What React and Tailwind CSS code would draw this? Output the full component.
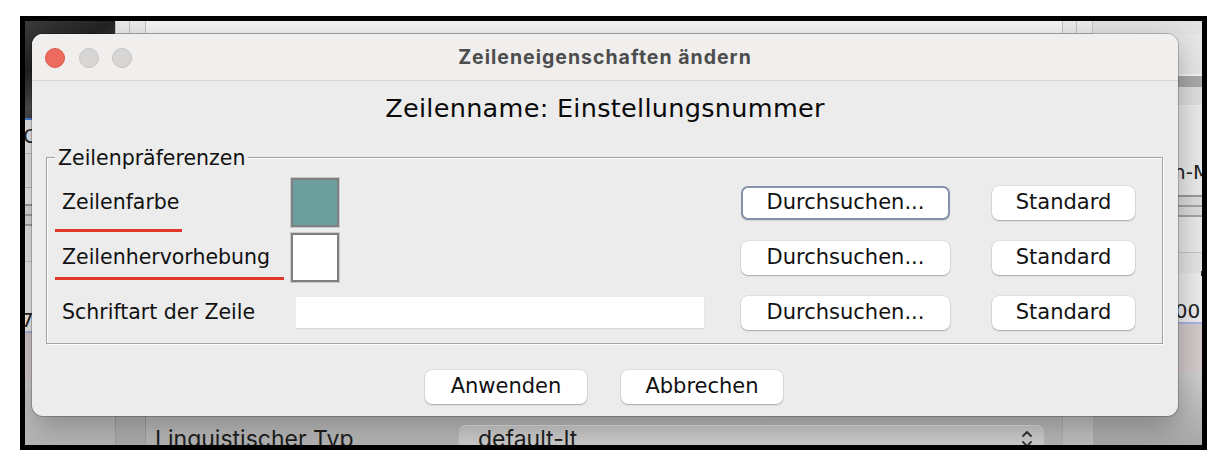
const BODY = "font-['DejaVu_Sans',sans-serif]";

function Btn({ children, w, focused }) {
  return (
    <div
      className={
        focused
          ? `${w} h-[34px] shrink-0 rounded-[7px] bg-white border-2 border-[#8593a9] flex items-center justify-center text-[21px] text-[#111] shadow-[0_1px_1px_rgba(0,0,0,0.12)]`
          : `${w} h-[34px] shrink-0 rounded-[7px] bg-white flex items-center justify-center text-[21px] text-[#111] shadow-[0_0_0_0.5px_rgba(0,0,0,0.1),0_1px_1.5px_rgba(0,0,0,0.25)]`
      }
    >
      {children}
    </div>
  );
}

function SideBands() {
  return (
    <>
      <div className="h-[2px] bg-[#4a7fd6] shrink-0" />
      <div className="h-[33px] bg-[#ebebeb] shrink-0 text-[20px] leading-[33px] text-[#222] whitespace-nowrap">
        <span className="-ml-[2px]">C</span>
      </div>
      <div className="h-px bg-[#c2c2c2] shrink-0" />
      <div className="h-[33px] bg-[#e6e6e6] shrink-0" />
      <div className="h-px bg-[#c2c2c2] shrink-0" />
      <div className="h-[16px] bg-[#ececec] shrink-0" />
      <div className="h-[2px] bg-[#9a9a9a] shrink-0" />
      <div className="h-[8px] bg-[#dcdcdc] shrink-0" />
      <div className="h-[2px] bg-[#a4a4a4] shrink-0" />
      <div className="h-[8px] bg-[#dcdcdc] shrink-0" />
      <div className="h-[2px] bg-[#a4a4a4] shrink-0" />
      <div className="h-[35px] bg-[#e8e8e8] shrink-0" />
      <div className="h-px bg-[#c6c6c6] shrink-0" />
      <div className="h-[69px] bg-[#ececec] shrink-0 flex flex-col justify-end text-[20px] leading-[22px] text-[#222] whitespace-nowrap">
        <span className="-ml-[4px]">7</span>
      </div>
      <div className="h-[2px] bg-[#a9b3e6] shrink-0" />
      <div className="h-[47px] bg-[#d3caca] shrink-0" />
      <div className="flex-1 bg-[linear-gradient(180deg,#cfcfcf,#b4b4b4)]" />
    </>
  );
}

function Background() {
  return (
    <div className={`flex h-full w-full ${BODY}`}>
      {/* column A */}
      <div className="w-[90px] shrink-0 flex flex-col">
        <div className="h-[97px] shrink-0 bg-[linear-gradient(150deg,#3b3b3b,#232323_35%,#505050_60%,#2b2b2b_80%,#3d3d3d)]" />
        <SideBands />
      </div>
      {/* column B */}
      <div className="w-[31px] shrink-0 flex flex-col bg-[#d3d3d3]">
        <div className="h-[13px] shrink-0 flex border-b border-[#cfcfcf]">
          <div className="w-[15px] bg-[#ececec] border-x border-[#c4c4c4]" />
          <div className="w-[16px] bg-[#ececec] border-r border-[#c4c4c4]" />
        </div>
        <div className="flex-1" />
        <div className="h-[40px] shrink-0 bg-[linear-gradient(180deg,#bdbdbd,#a9a9a9)] border-x border-[#a0a0a0]" />
      </div>
      {/* column C */}
      <div className="w-[916px] shrink-0 flex flex-col bg-[#d6d6d6]">
        <div className="h-[13px] shrink-0 bg-[#f5f5f5] border-b border-[#cfcfcf]" />
        <div className="flex-1" />
        <div className="h-[40px] shrink-0 bg-[linear-gradient(180deg,#c4c4c4,#b3b3b3)] flex">
          <div className="w-[312px] shrink-0 pl-[9px] pt-[20px] font-['Inter',sans-serif] text-[23px] leading-[28px] text-[#1e1e1e] whitespace-nowrap">
            Linguistischer Typ
          </div>
          <div className="mt-[19px] w-[587px] h-[30px] rounded-t-[8px] bg-[#cbcbcb] border border-[#b9b9b9] shadow-[inset_0_1px_0_rgba(255,255,255,0.45)] flex items-start pl-[19px] pr-[10px]">
            <span className="font-['Inter',sans-serif] text-[23px] leading-[28px] text-[#1e1e1e]">default-lt</span>
            <svg className="ml-auto mt-[4px]" width="14" height="24" viewBox="0 0 14 24" fill="none" stroke="#333" strokeWidth="1.8" strokeLinecap="round" strokeLinejoin="round">
              <path d="M3 7 L7 3 L11 7" />
              <path d="M3 13 L7 17 L11 13" />
            </svg>
          </div>
        </div>
      </div>
      {/* column E */}
      <div className="w-[31px] shrink-0 flex flex-col bg-[#d0d0d0]">
        <div className="h-[13px] shrink-0 flex border-b border-[#cfcfcf]">
          <div className="w-[15px] bg-[#ececec] border-x border-[#c4c4c4]" />
          <div className="w-[16px] bg-[#ececec] border-r border-[#c4c4c4]" />
        </div>
        <div className="flex-1" />
        <div className="h-[40px] shrink-0 bg-[linear-gradient(180deg,#c9c9c9,#bdbdbd)] border-l border-[#b0b0b0]" />
      </div>
      {/* column D */}
      <div className="flex-1 flex flex-col">
        <div className="h-[13px] shrink-0 bg-[#e2e2e2]" />
        <div className="h-[42px] shrink-0 bg-[#e6e6e6] border-b-2 border-[#f4f4f4]" />
        <div className="h-[11px] shrink-0 bg-[#a9a9a9]" />
        <div className="h-[18px] shrink-0 bg-[#dedede]" />
        <div className="h-px shrink-0 bg-[#ececec]" />
        <div className="h-[89px] shrink-0 bg-[#e9e9e9] flex flex-col justify-end pb-[11px] text-[20px] leading-[24px] text-[#222] whitespace-nowrap">
          <span className="pl-[80px]">n-M</span>
        </div>
        <div className="h-[2px] bg-[#9a9a9a] shrink-0" />
        <div className="h-[8px] bg-[#dcdcdc] shrink-0" />
        <div className="h-[2px] bg-[#a4a4a4] shrink-0" />
        <div className="h-[8px] bg-[#dcdcdc] shrink-0" />
        <div className="h-[2px] bg-[#a4a4a4] shrink-0" />
        <div className="h-[35px] bg-[#e8e8e8] shrink-0" />
        <div className="h-px bg-[#c6c6c6] shrink-0" />
        <div className="h-[69px] bg-[#ececec] shrink-0 flex flex-col text-[20px] leading-[22px] text-[#222] whitespace-nowrap">
          <div className="h-[20px] shrink-0 bg-[#e4e4e4] flex justify-end pr-[8px] pt-[18px]">
            <div className="w-px h-[5px] bg-[#333]" />
          </div>
          <div className="flex-1 flex flex-col justify-end">
            <span className="pl-[69px]">100</span>
          </div>
        </div>
        <div className="h-[2px] bg-[#a9b3e6] shrink-0" />
        <div className="h-[47px] bg-[#d3caca] shrink-0" />
        <div className="flex-1 bg-[linear-gradient(180deg,#cfcfcf,#a8a8a8)]" />
      </div>
    </div>
  );
}

function Swatch({ color }) {
  return (
    <div className={`w-[48px] h-[49px] shrink-0 border-2 border-[#7f7f7f] shadow-[0_0_0_1px_#cacaca] ${color}`} />
  );
}

function Dialog() {
  return (
    <div className={`absolute left-[7px] top-[13px] w-[1146px] h-[382px] rounded-[11px] overflow-hidden bg-[#ececec] shadow-[0_0_0_1px_rgba(0,0,0,0.2),0_10px_30px_rgba(0,0,0,0.3)] flex flex-col ${BODY}`}>
      <div className="relative h-[47px] shrink-0 bg-[#f0efed] border-b border-[#d6d6d6] flex items-center justify-center">
        <div className="absolute left-[13px] top-[14px] flex gap-[13.5px]">
          <div className="w-[20px] h-[20px] rounded-full bg-[#ed6a5e] border border-[#d9594c]" />
          <div className="w-[20px] h-[20px] rounded-full bg-[#d7d6d5] border border-[#c5c4c3]" />
          <div className="w-[20px] h-[20px] rounded-full bg-[#d7d6d5] border border-[#c5c4c3]" />
        </div>
        <span className="font-['Inter',sans-serif] font-bold text-[19.5px] tracking-[1px] text-[#4d4d4d] pt-[1px]">
          Zeileneigenschaften ändern
        </span>
      </div>

      <div className="pt-[12px] text-center text-[25.5px] leading-[30px] text-[#0a0a0a] tracking-[0.3px]">
        Zeilenname: Einstellungsnummer
      </div>

      <div className="relative mt-[34px] ml-[14px] mr-[15px] border border-[#a2a2a2] shadow-[1px_1px_0_#fbfbfb,inset_1px_1px_0_#fbfbfb] pt-[17px] pb-[3px]">
        <div className="absolute left-[8px] -top-[12px] px-[3px] bg-[#ececec] text-[20.5px] leading-[24px] text-[#111]">
          Zeilenpräferenzen
        </div>

        {/* row 1 */}
        <div className="h-[55px] flex items-center pl-[15px] pr-[27px]">
          <div className="relative w-[229px] h-full shrink-0 flex items-center text-[20.5px] text-[#111]">
            Zeilenfarbe
            <div className="absolute left-[-7px] top-[54px] w-[127px] h-[3px] bg-[#e0382b]" />
          </div>
          <Swatch color="bg-[#6b9e9d]" />
          <div className="ml-auto flex gap-[42px]">
            <Btn w="w-[209px]" focused>Durchsuchen...</Btn>
            <Btn w="w-[143px]">Standard</Btn>
          </div>
        </div>

        {/* row 2 */}
        <div className="h-[55px] flex items-center pl-[15px] pr-[27px]">
          <div className="relative w-[229px] h-full shrink-0 flex items-center text-[20.5px] text-[#111]">
            Zeilenhervorhebung
            <div className="absolute left-[-7px] top-[47px] w-[229px] h-[3px] bg-[#e0382b]" />
          </div>
          <Swatch color="bg-white" />
          <div className="ml-auto flex gap-[42px]">
            <Btn w="w-[209px]">Durchsuchen...</Btn>
            <Btn w="w-[143px]">Standard</Btn>
          </div>
        </div>

        {/* row 3 */}
        <div className="h-[55px] flex items-center pl-[15px] pr-[27px]">
          <div className="w-[229px] h-full shrink-0 flex items-center text-[20.5px] text-[#111] whitespace-nowrap">
            Schriftart der Zeile
          </div>
          <div className="ml-[5px] w-[408px] h-[31px] shrink-0 bg-white shadow-[0_1.5px_0_#d9d9d9,0.5px_0_0_#e4e4e4]" />
          <div className="ml-auto flex gap-[42px]">
            <Btn w="w-[209px]">Durchsuchen...</Btn>
            <Btn w="w-[143px]">Standard</Btn>
          </div>
        </div>
      </div>

      <div className="mt-[26px] flex justify-center gap-[34px] pr-[2px]">
        <Btn w="w-[162px]">Anwenden</Btn>
        <Btn w="w-[162px]">Abbrechen</Btn>
      </div>
    </div>
  );
}

export default function App() {
  return (
    <div className="w-[1226px] h-[476px] bg-white pt-[16px] pl-[20px]">
      <div className="relative w-[1187px] h-[434px] border-[5px] border-black overflow-hidden">
        <Background />
        <Dialog />
      </div>
    </div>
  );
}
